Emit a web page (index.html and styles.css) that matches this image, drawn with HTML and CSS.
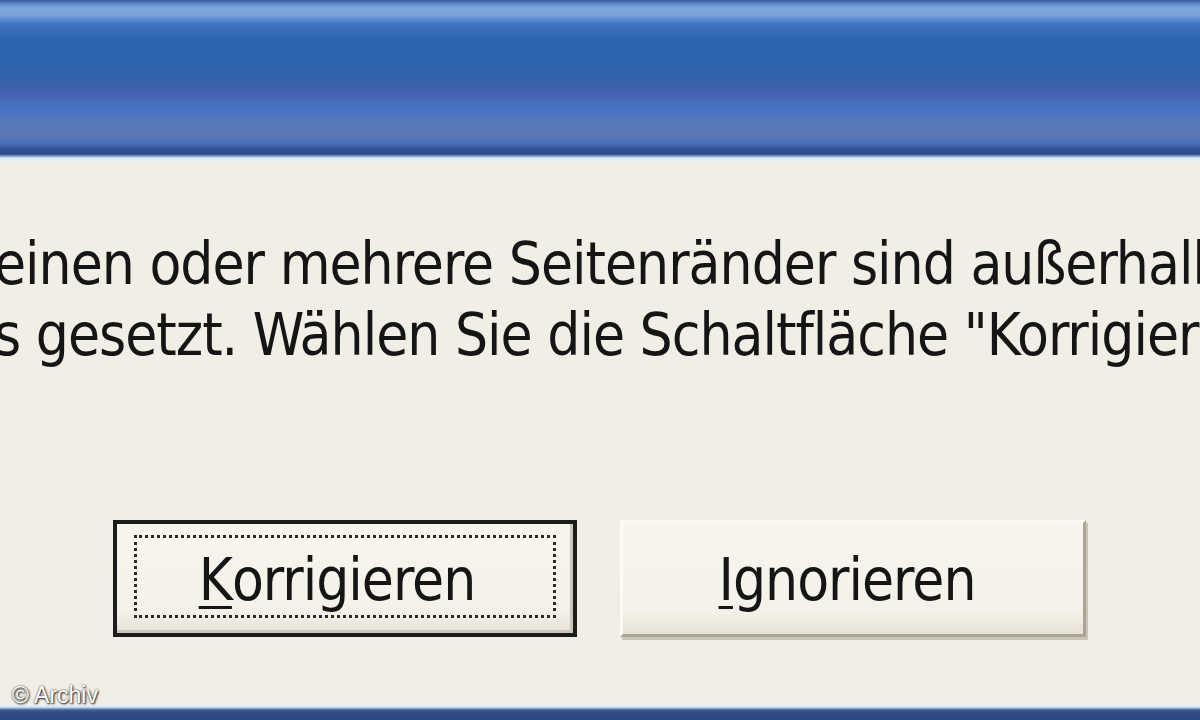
FILE: index.html
```html
<!DOCTYPE html>
<html lang="de">
  <head>
    <meta charset="UTF-8" />
    <meta name="viewport" content="width=device-width, initial-scale=1.0" />
    <title>Seitenränder</title>
    <link rel="stylesheet" href="styles.css">
  </head>
  <body>
    <div class="window">
      <div class="titlebar"></div>
      <div class="dialog">
        <div class="message">
          <p class="line">einen oder mehrere Seitenränder sind außerhalb</p>
          <p class="line">s gesetzt. Wählen Sie die Schaltfläche "Korrigieren"</p>
        </div>
        <div class="buttons">
          <button class="btn default"><span class="focus"><u>K</u>orrigieren</span></button>
          <button class="btn"><span class="focus"><u>I</u>gnorieren</span></button>
        </div>
      </div>
      <div class="frame-bottom"></div>
      <!-- watermark sits over the dialog -->
      <div class="credit">© Archiv</div>
    </div>
  </body>
</html>
```

FILE: styles.css
```css
* {
  margin: 0;
  padding: 0;
  box-sizing: border-box;
}
body {
  width: 1200px;
  height: 720px;
  overflow: hidden;
  background: #f1eee5;
}
.window {
  position: relative;
  width: 1200px;
  height: 720px;
  display: flex;
  flex-direction: column;
  background: #f1eee5;
}
.titlebar {
  height: 162px;
  flex-shrink: 0;
  background: linear-gradient(
    to bottom,
    #3a5a9a 0px,
    #5f8bd0 4px,
    #7ba5dd 8px,
    #7aa2da 15px,
    #3f73bf 24px,
    #2c63b0 40px,
    #2d63ae 62px,
    #3563aa 80px,
    #4661b0 95px,
    #4874c3 108px,
    #5478bb 122px,
    #5c78b6 134px,
    #4b70b8 143px,
    #2f5192 150px,
    #2b4a84 154px,
    #7d9ccc 156px,
    #dcecf8 158px,
    #eef2ee 162px
  );
}
.dialog {
  flex: 1;
  display: flex;
  flex-direction: column;
  overflow: hidden;
}
.message {
  padding-top: 67px;
  font-family: "DejaVu Sans Condensed", "DejaVu Sans", sans-serif;
  font-size: 58px;
  letter-spacing: -1px;
  color: #151515;
}
.line {
  white-space: nowrap;
  line-height: 71px;
  margin-left: -6px;
}
.buttons {
  display: flex;
  gap: 43px;
  padding-left: 113px;
  margin-top: 149px;
}
.btn {
  width: 466px;
  height: 117px;
  font-family: "DejaVu Sans Condensed", "DejaVu Sans", sans-serif;
  font-size: 58px;
  letter-spacing: -1px;
  color: #151515;
  background: linear-gradient(to bottom, #f7f5ee 0%, #f4f1e8 80%, #e6e1d6 100%);
  border: 3px solid;
  border-color: #fbfaf6 #aaa597 #aaa597 #fbfaf6;
  box-shadow: 2px 3px 0 #c9c4b6;
  padding: 13px 30px 16px 18px;
  display: flex;
}
.btn.default {
  width: 464px;
  border: 4px solid #1c1c1c;
  padding: 11px 17px 15px;
  box-shadow: inset -3px -3px 0 #cbc6ba;
}
.focus {
  flex: 1;
  display: flex;
  align-items: center;
  justify-content: center;
  padding-top: 6px;
  border: 3px dotted transparent;
}
.btn.default .focus {
  border-color: #2a2a2a;
  padding-right: 16px;
}
.btn u {
  text-decoration-thickness: 3px;
  text-underline-offset: 6px;
}
.frame-bottom {
  height: 16px;
  flex-shrink: 0;
  background: linear-gradient(to bottom, #eef2f6 0px, #dce6f0 3px, #3c5d98 6px, #2b4a86 9px, #2a4983 16px);
}
.credit {
  position: absolute;
  left: 12px;
  top: 682px;
  font-family: "Liberation Sans", Arial, sans-serif;
  font-size: 23px;
  color: #ffffff;
  text-shadow: 0 0 2px #333, 1px 1px 2px #222;
}
```
